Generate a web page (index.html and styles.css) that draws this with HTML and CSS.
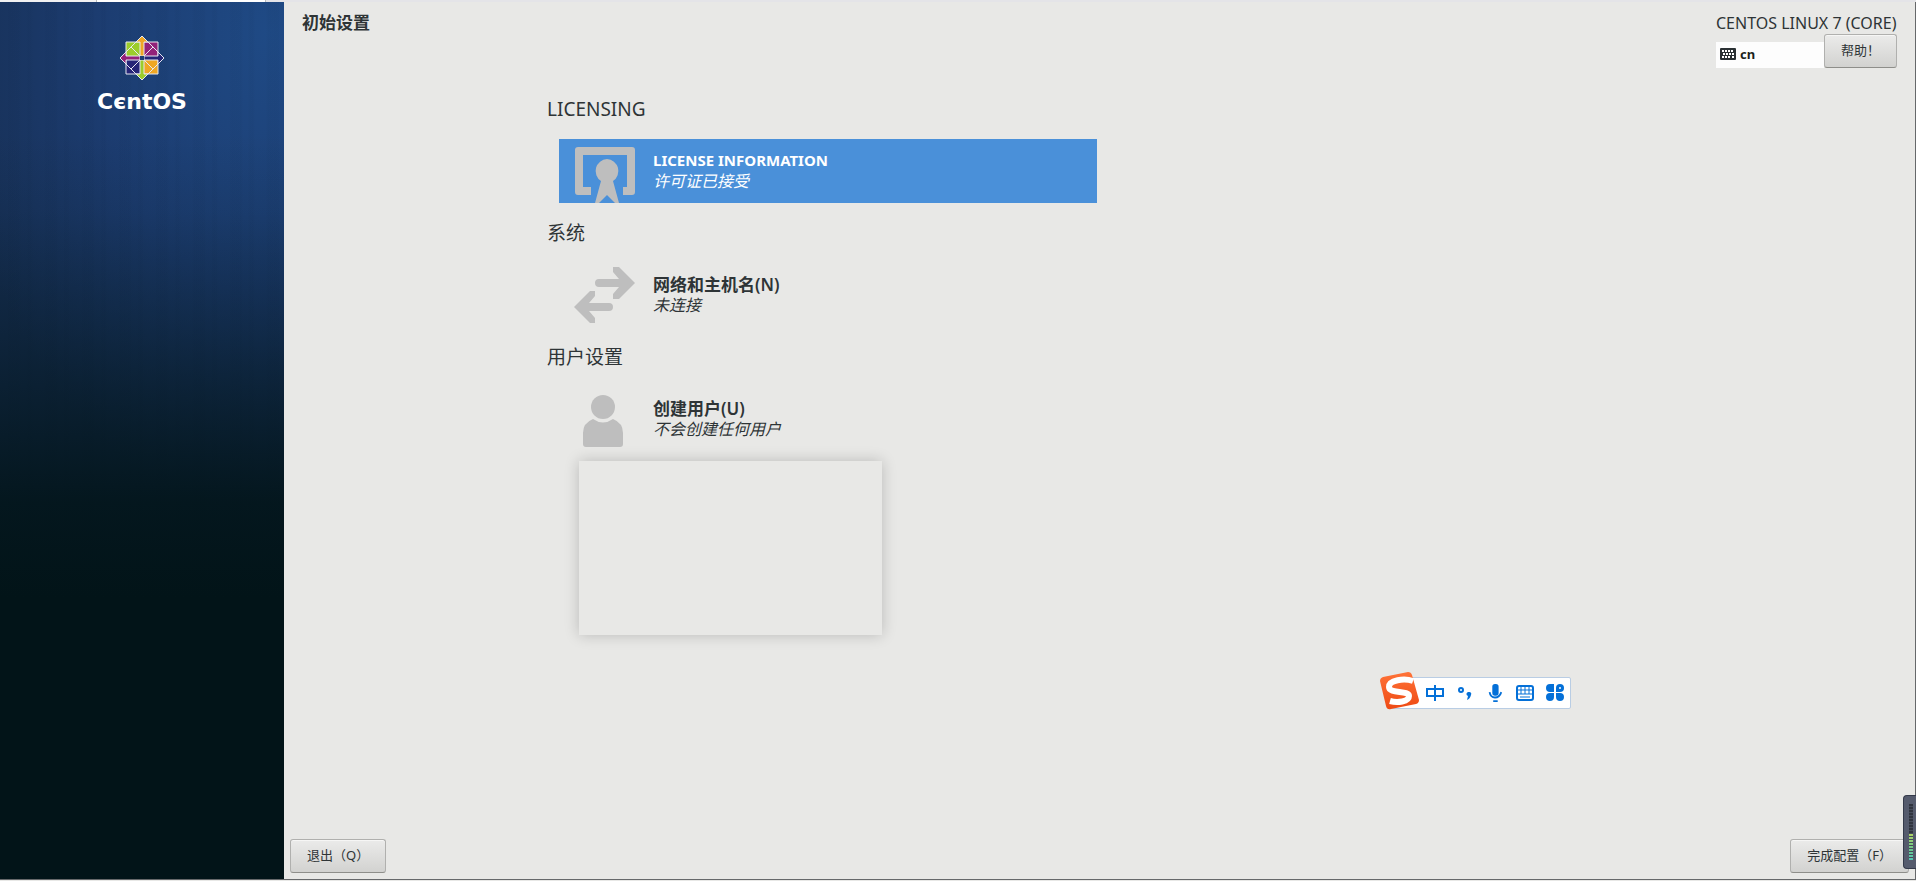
FILE: index.html
```html
<!DOCTYPE html>
<html lang="zh-CN">
<head>
    <meta charset="UTF-8">
    <meta name="viewport" content="width=device-width, initial-scale=1.0">
    <title>初始设置</title>
    <link rel="stylesheet" href="styles.css">
</head>
<body>
    <div class="tabstrip"><span></span><span class="active"></span><span class="rest"></span></div>
    <div class="window">
        <aside class="sidebar">
            <svg class="logo-mark" viewBox="0 0 46 46" aria-hidden="true">
                <g stroke="#e6e8f0" stroke-width="1">
                    <path d="M7 7h15v15H7z" fill="#9ccd2a"/>
                    <path d="M24 7h15v15H24z" fill="#932279"/>
                    <path d="M7 24h15v15H7z" fill="#262577"/>
                    <path d="M24 24h15v15H24z" fill="#efa724"/>
                    <path d="M23 1l11 11-11 11-11-11z" fill="none"/>
                    <path d="M23 23l11 11-11 11-11-11z" fill="none"/>
                    <path d="M12 12l11 11-11 11L1 23z" fill="none"/>
                    <path d="M34 12l11 11-11 11-11-11z" fill="none"/>
                    <path d="M23 1l6 6h-4v14h-4V7h-4z" fill="#efa724"/>
                    <path d="M45 23l-6 6v-4H25v-4h14v-4z" fill="#262577"/>
                    <path d="M23 45l-6-6h4V25h4v14h4z" fill="#9ccd2a"/>
                    <path d="M1 23l6-6v4h14v4H7v4z" fill="#932279"/>
                </g>
                <path d="M21 21h4v4h-4z" fill="#1d3f74"/>
            </svg>
            <div class="logo-text">CєntOS</div>
        </aside>
        <div class="main">
            <header class="header">
                <h1>初始设置</h1>
                <div class="header-right">
                    <div class="product">CENTOS LINUX 7 (CORE)</div>
                    <div class="tools">
                        <div class="layout">
                            <svg viewBox="0 0 16 12" aria-hidden="true">
                                <rect width="16" height="12" rx="1" fill="#2a3033"/>
                                <path d="M2 3h12M3 6h11M2 9h2M5 9h6M12 9h2" stroke="#fff" stroke-width="2" stroke-dasharray="2 1"/>
                            </svg>
                            <span>cn</span>
                        </div>
                        <button class="btn help" type="button">帮助！</button>
                    </div>
                </div>
            </header>
            <main class="content">
                <section>
                    <h2>LICENSING</h2>
                    <a class="spoke selected" href="#license">
                        <svg viewBox="0 0 64 64" fill="#bebebe" aria-hidden="true">
                            <path d="M5 8h54a3 3 0 0 1 3 3v42a3 3 0 0 1-3 3h-9v-8h4V16H10v32h8v8H5a3 3 0 0 1-3-3V11a3 3 0 0 1 3-3z"/>
                            <path d="M34 20a12 12 0 0 1 6 22l6 22h-4l-8-8-8 8h-4l6-22a12 12 0 0 1 6-22z"/>
                        </svg>
                        <span class="spoke-text"><strong class="latin">LICENSE INFORMATION</strong><em>许可证已接受</em></span>
                    </a>
                </section>
                <section>
                    <h2>系统</h2>
                    <a class="spoke" href="#network">
                        <svg viewBox="0 0 64 64" fill="#bebebe" aria-hidden="true">
                            <path d="M26 16h20l-6-7V4h6l16 16-16 16h-6v-5l6-7H26a4 4 0 0 1 0-8z"/>
                            <path d="M36 40H16l6-7v-5h-5L1 44l16 16h5v-5l-6-7h20a4 4 0 0 0 0-8z"/>
                        </svg>
                        <span class="spoke-text"><strong>网络和主机名(N)</strong><em>未连接</em></span>
                    </a>
                </section>
                <section>
                    <h2>用户设置</h2>
                    <a class="spoke" href="#user">
                        <svg viewBox="0 0 64 64" fill="#bebebe" aria-hidden="true">
                            <circle cx="30" cy="20" r="12"/>
                            <path d="M20 32q10 7 20 0q10 4 10 14v11a3 3 0 0 1-3 3H13a3 3 0 0 1-3-3V46q0-10 10-14z"/>
                        </svg>
                        <span class="spoke-text"><strong>创建用户(U)</strong><em>不会创建任何用户</em></span>
                    </a>
                </section>
                <div class="ghost"></div>
            </main>
            <footer class="footer">
                <button class="btn" type="button">退出（Q）</button>
                <button class="btn" type="button">完成配置（F）</button>
            </footer>
        </div>
    </div>

    <div class="ime">
        <svg class="ime-logo" viewBox="0 0 40 38" aria-hidden="true">
            <defs>
                <linearGradient id="orange" x1="0" y1="0" x2="0" y2="1">
                    <stop offset="0" stop-color="#ff7338"/>
                    <stop offset="1" stop-color="#ee4a14"/>
                </linearGradient>
            </defs>
            <path d="M3 5L28 0q3 0 4 3l7 25q0 3-3 4L11 37q-4 1-5-3L0 9q0-3 3-4z" fill="url(#orange)"/>
            <path d="M33 9C24 6 9 8 9 15c0 7 20 3 20 9 0 6-12 7-19 5" fill="none" stroke="#fff" stroke-width="6"/>
        </svg>
        <svg viewBox="0 0 18 18" aria-hidden="true">
            <path d="M1 5h16v7H1zM9 1v16" fill="none" stroke="#0470d8" stroke-width="2"/>
        </svg>
        <svg viewBox="0 0 18 18" aria-hidden="true">
            <circle cx="5" cy="6" r="2" fill="none" stroke="#0470d8" stroke-width="2"/>
            <path d="M13 8a2 2 0 0 1 2 3q-1 4-4 5l1-4a2 2 0 0 1 1-4z" fill="#0470d8"/>
        </svg>
        <svg viewBox="0 0 18 20" aria-hidden="true">
            <rect x="6" width="7" height="13" rx="3" fill="#0470d8"/>
            <path d="M3 9q1 6 6 6t7-6M7 19h5" fill="none" stroke="#0470d8" stroke-width="2"/>
        </svg>
        <svg viewBox="0 0 18 16" aria-hidden="true">
            <rect x="1" y="1" width="16" height="14" rx="2" fill="none" stroke="#0470d8" stroke-width="2"/>
            <path d="M1 5h16M1 9h16M5 1v8M9 1v8M13 1v8M4 12h10" stroke="#0470d8" stroke-width="1"/>
        </svg>
        <svg viewBox="0 0 18 18" aria-hidden="true">
            <path d="M4 0h4v8H4a4 4 0 0 1 0-8zM4 9h4v4a4 4 0 1 1-4-4zM10 9h4a4 4 0 1 1-4 4z" fill="#0470d8"/>
            <path d="M10 8V4a4 4 0 1 1 4 4z" fill="#0470d8"/>
            <circle cx="14" cy="4" r="1" fill="#fff"/>
        </svg>
    </div>
    <div class="meter"><i></i></div>
</body>
</html>
```
FILE: styles.css
```css
* {
    box-sizing: border-box;
}
body {
    margin: 0;
    min-height: 100vh;
    display: flex;
    flex-direction: column;
    background: #e8e8e6;
    color: #2e3436;
    font-family: 'Noto Sans', 'Noto Sans CJK SC', sans-serif;
    font-size: 16px;
}
.tabstrip {
    display: flex;
    height: 2px;
    gap: 1px;
    background: #b8bbbd;
}
.tabstrip span {
    width: 96px;
    background: #f1f1f2;
}
.tabstrip .active {
    width: 168px;
    background: #fff;
}
.tabstrip .rest {
    flex: 1;
    background: #e4e4e8;
}
.window {
    flex: 1;
    display: flex;
    margin-bottom: 1px;
    border-right: 1px solid #66686a;
    border-bottom: 1px solid #66686a;
}
.sidebar {
    width: 284px;
    padding-top: 33px;
    display: flex;
    flex-direction: column;
    align-items: center;
    background:
        linear-gradient(to bottom, rgba(2, 20, 24, 0) 15%, rgba(2, 20, 24, 0.1) 24%, rgba(2, 20, 24, 0.4) 37%, rgba(2, 20, 24, 0.65) 47%, rgba(2, 20, 24, 0.9) 57%, #021418 68%),
        repeating-linear-gradient(to right, transparent 0 7px, rgba(4, 20, 40, 0.03) 9px 19px, transparent 21px 26px, rgba(4, 20, 40, 0.03) 28px 31px, transparent 33px 37px),
        radial-gradient(ellipse 320px 480px at 270px 30px, #1f4a85, #1c3c70 55%, #173056);
}
.logo-mark {
    width: 46px;
    height: 46px;
}
.logo-text {
    color: #fff;
    font-family: 'DejaVu Sans', sans-serif;
    font-size: 22px;
    font-weight: bold;
    line-height: 42px;
}
.main {
    flex: 1;
    display: flex;
    flex-direction: column;
}
.header {
    display: flex;
    justify-content: space-between;
    padding: 8px 18px 0;
}
h1 {
    margin: 0;
    font-size: 17px;
    line-height: 26px;
}
.header-right {
    width: 181px;
}
.product {
    height: 24px;
    line-height: 26px;
    white-space: nowrap;
}
.tools {
    display: flex;
    align-items: flex-end;
}
.layout {
    flex: 1;
    height: 26px;
    padding: 0 0 2px 4px;
    display: flex;
    align-items: center;
    gap: 4px;
    background: #fdfdfd;
    color: #1b1f20;
    font-size: 13px;
    font-weight: bold;
}
.layout svg {
    width: 16px;
    height: 12px;
}
.btn {
    height: 34px;
    padding: 0 16px 3px;
    border: 1px solid #b0b0ae;
    border-bottom-color: #8e8e8a;
    border-radius: 3px;
    background: linear-gradient(to bottom, #ebebea, #d2d2d0);
    box-shadow: inset 0 1px #f6f6f5;
    color: #2e3436;
    font-family: inherit;
    font-size: 13px;
}
.help {
    width: 73px;
}
.content {
    flex: 1;
    width: 556px;
    margin-left: 263px;
    padding-top: 23px;
}
h2 {
    height: 48px;
    margin: 0;
    font-size: 19px;
    font-weight: normal;
    line-height: 36px;
}
section {
    margin-bottom: 12px;
}
section:last-of-type {
    margin-bottom: 10px;
}
.spoke {
    display: flex;
    align-items: center;
    height: 64px;
    margin: 0 6px 0 12px;
    padding-left: 14px;
    gap: 16px;
    color: #2e3436;
    text-decoration: none;
}
.spoke svg {
    width: 64px;
    height: 64px;
}
.spoke.selected {
    background: #4a90d9;
    color: #fff;
}
.spoke-text {
    display: flex;
    flex-direction: column;
    line-height: 21px;
}
.spoke-text strong {
    font-size: 17px;
    font-weight: 600;
}
.spoke-text .latin {
    font-size: 15px;
    font-weight: 700;
}
.ghost {
    width: 303px;
    height: 174px;
    margin-left: 32px;
    box-shadow: 0 0 14px rgba(0, 0, 0, 0.2);
}
.footer {
    display: flex;
    justify-content: space-between;
    padding: 6px;
}
.ime {
    position: absolute;
    right: 345px;
    bottom: 172px;
    width: 180px;
    height: 32px;
    display: flex;
    align-items: center;
    gap: 12px;
    padding-left: 34px;
    border: 1px solid #b9cde4;
    border-radius: 2px;
    background: #fff;
}
.ime svg {
    width: 18px;
    height: 18px;
}
.ime .ime-logo {
    position: absolute;
    left: -12px;
    bottom: -2px;
    width: 40px;
    height: 38px;
}
.meter {
    position: absolute;
    right: 0;
    bottom: 12px;
    width: 13px;
    height: 74px;
    padding: 8px 3px 8px 5px;
    border: 1px solid #343a4a;
    border-right: 0;
    border-radius: 4px 0 0 4px;
    background: #555b6d;
}
.meter i {
    display: block;
    height: 100%;
    background:
        repeating-linear-gradient(to bottom, transparent 0 2px, #454c5a 2px 3px),
        linear-gradient(to bottom, #30343f 52%, #b3d465 52%, #70c888 78%, #55c5b5);
}
```
